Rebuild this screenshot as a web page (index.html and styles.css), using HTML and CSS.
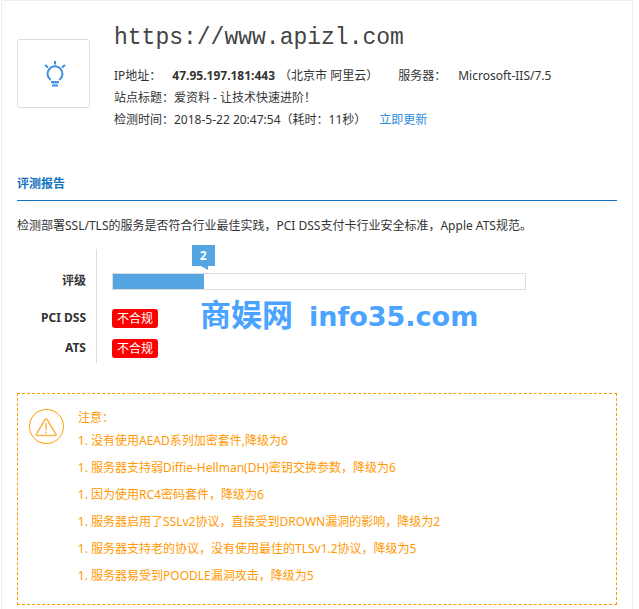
FILE: index.html
```
<!DOCTYPE html>
<html lang="zh-CN">
<head>
    <meta charset="UTF-8">
    <title>评测报告</title>
    <link rel="stylesheet" href="styles.css">
</head>
<body>

<div class="panel">
    <div class="site">
        <div class="logo">
            <svg width="24" height="28" viewBox="0 0 24 28" fill="none" stroke="#3a8fdb" stroke-width="2">
                <path d="M7.700 20A7.500 7.500 0 1 1 16.300 20"/>
                <path d="M12 1V4.500M2 5L5 7.500M22 5L19 7.500"/>
                <path d="M8 22H16M9 25.500H15"/>
                <path d="M9 23.700H15" stroke="#9cc8ee"/>
            </svg>
        </div>
        <div class="info">
            <h1 class="url">https://www.apizl.com</h1>
            <p>IP地址：<strong class="ip">47.95.197.181:443</strong>（北京市 阿里云）<span class="server">服务器：</span>Microsoft-IIS/7.5</p>
            <p>站点标题：爱资料 - 让技术快速进阶！</p>
            <p>检测时间：2018-5-22 20:47:54（耗时：11秒）<a href="#" class="update">立即更新</a></p>
        </div>
    </div>

    <h2 class="title">评测报告</h2>
    <p class="desc">检测部署SSL/TLS的服务是否符合行业最佳实践，PCI DSS支付卡行业安全标准，Apple ATS规范。</p>

    <div class="report">
        <table class="result">
            <tr class="level">
                <th scope="row">评级</th>
                <td>
                    <div class="bar">
                        <div class="fill" style="width: 22%"><span class="mark">2</span></div>
                    </div>
                </td>
            </tr>
            <tr>
                <th scope="row">PCI DSS</th>
                <td><span class="tag">不合规</span></td>
            </tr>
            <tr>
                <th scope="row">ATS</th>
                <td><span class="tag">不合规</span></td>
            </tr>
        </table>
        <div class="watermark"><span class="cn">商娱网</span><span>info35.com</span></div>
    </div>

    <div class="notice">
        <svg class="warn" width="36" height="36" viewBox="0 0 36 36" fill="none" stroke="#f90">
            <circle cx="17.500" cy="17.500" r="17"/>
            <path d="M16 10.500Q17 9 18 10.500L27 25Q27.500 26.500 26 26.500H8.500Q7 26.500 7.500 25Z" stroke="#fbb54d" stroke-width="1.500"/>
            <path d="M17 14V21M17 22.500V24.500" stroke="#fbb54d" stroke-width="1.500"/>
        </svg>
        <div>
            <p class="tip">注意：</p>
            <ol>
                <li value="1">没有使用AEAD系列加密套件,降级为6</li>
                <li value="1">服务器支持弱Diffie-Hellman(DH)密钥交换参数，降级为6</li>
                <li value="1">因为使用RC4密码套件，降级为6</li>
                <li value="1">服务器启用了SSLv2协议，直接受到DROWN漏洞的影响，降级为2</li>
                <li value="1">服务器支持老的协议，没有使用最佳的TLSv1.2协议，降级为5</li>
                <li value="1">服务器易受到POODLE漏洞攻击，降级为5</li>
            </ol>
        </div>
    </div>
</div>

</body>
</html>
```
FILE: styles.css
```
*{
    padding: 0;
    margin: 0;
    box-sizing: border-box;
}
body {
    background-color: #fff;
    color: #333;
    font-family: "Noto Sans", "Noto Sans CJK SC", sans-serif;
    font-size: 12px;
    line-height: 22px;
}

.panel{
    min-height: 100vh;
    margin: 0 6px 0 1px;
    padding: 19px 15px 4px;
    border: 1px solid #eee;
    border-bottom: 0;
}

.site{
    display: flex;
    gap: 24px;
}

.logo{
    display: flex;
    justify-content: center;
    align-items: center;
    width: 73px;
    height: 69px;
    margin-top: 19px;
    padding-left: 3px;
    border: 1px solid #ddd;
    border-radius: 3px;
}

.url{
    margin-bottom: 9px;
    color: #444;
    font-family: "Liberation Mono", monospace;
    font-size: 23px;
    font-weight: normal;
    line-height: 36px;
}

.ip{
    margin: 0 4px 0 11px;
}

.server{
    margin: 0 12px 0 20px;
}

.update{
    margin-left: 13px;
    color: #2d8ddb;
    text-decoration: none;
}

.title{
    margin-top: 42px;
    padding-bottom: 5px;
    border-bottom: 1px solid #1272bf;
    color: #1272bf;
    font-size: 12px;
}

.desc{
    margin: 14px 0 12px;
}

.report{
    position: relative;
}

.result{
    width: 100%;
    border-collapse: separate;
    border-spacing: 0;
    line-height: 18px;
}

.result th{
    width: 80px;
    height: 30px;
    padding-right: 10px;
    border-right: 1px solid #ddd;
    text-align: right;
}

.result td{
    padding-left: 15px;
}

.result .level th,
.result .level td{
    padding-top: 23px;
    padding-bottom: 13px;
}

.bar{
    width: 82%;
    height: 17px;
    border: 1px solid #ddd;
}

.fill{
    position: relative;
    height: 100%;
    background-color: #55a5e3;
}

.mark{
    position: absolute;
    right: -11px;
    bottom: 23px;
    width: 23px;
    background-color: #55a5e3;
    color: #fff;
    font-size: 12px;
    font-weight: bold;
    line-height: 21px;
    text-align: center;
}

.mark::after{
    content: "";
    position: absolute;
    top: 100%;
    left: 9px;
    border-top: 4px solid #55a5e3;
    border-left: 7px solid transparent;
}

.tag{
    display: block;
    width: 46px;
    border-radius: 3px;
    background-color: #f00;
    color: #fff;
    line-height: 19px;
    text-align: center;
}

.watermark{
    position: absolute;
    top: 48px;
    left: 183px;
    display: flex;
    align-items: baseline;
    gap: 16px;
    color: #4aa3ff;
    font-family: "DejaVu Sans", "Noto Sans CJK SC", sans-serif;
    font-size: 27px;
    font-weight: bold;
    line-height: 36px;
}

.cn{
    font-size: 31px;
}

.notice{
    display: flex;
    gap: 13px;
    margin-top: 30px;
    padding: 15px 11px;
    border: 1px dashed #f90;
    color: #f90;
}

.warn{
    flex: none;
}

.tip{
    line-height: 18px;
}

.notice ol{
    padding-left: 13px;
    line-height: 27px;
}
```
